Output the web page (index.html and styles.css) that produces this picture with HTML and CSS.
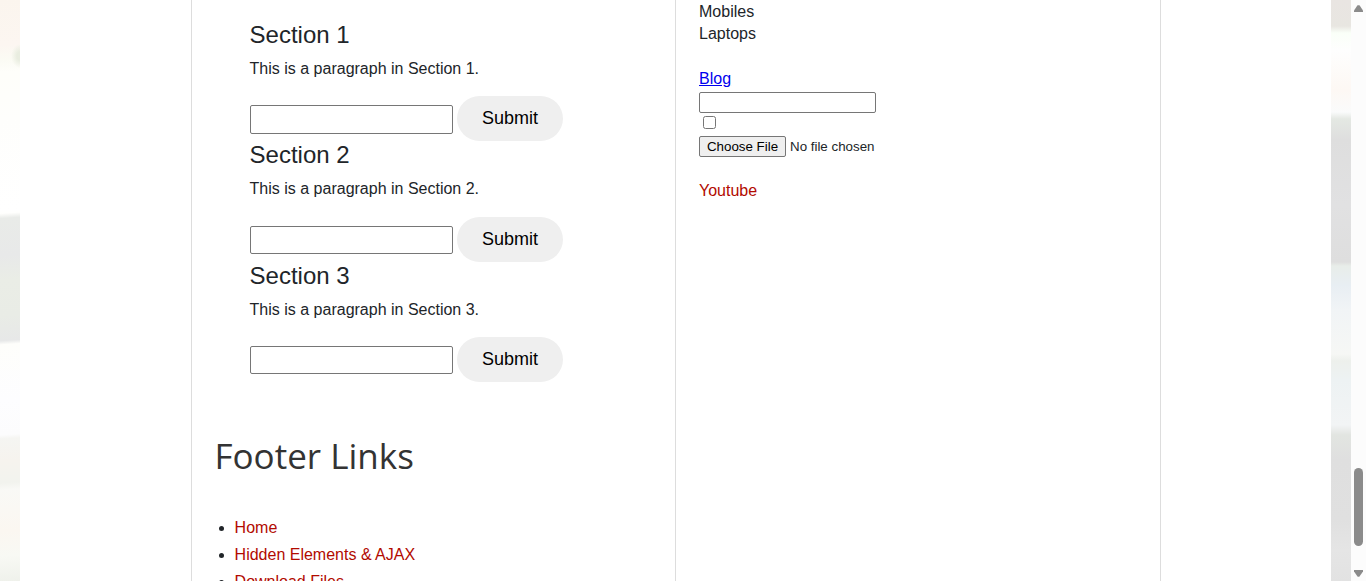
FILE: index.html
```
<!DOCTYPE html>
<html lang="en">
<head>
<meta charset="utf-8">
<title>Sections</title>
<link rel="stylesheet" href="styles.css">
</head>
<body>
<div class="page">
  <div class="backdrop backdrop-left"></div>
  <main class="sheet">
    <div class="column column-main">
      <div class="sections">
        <section class="section">
          <h4 class="section-title">Section 1</h4>
          <p class="section-text">This is a paragraph in Section 1.</p>
          <form class="section-form"><input class="section-input" type="text"><button class="submit" type="button">Submit</button></form>
        </section>
        <section class="section">
          <h4 class="section-title">Section 2</h4>
          <p class="section-text">This is a paragraph in Section 2.</p>
          <form class="section-form"><input class="section-input" type="text"><button class="submit" type="button">Submit</button></form>
        </section>
        <section class="section">
          <h4 class="section-title">Section 3</h4>
          <p class="section-text">This is a paragraph in Section 3.</p>
          <form class="section-form"><input class="section-input" type="text"><button class="submit" type="button">Submit</button></form>
        </section>
      </div>
      <h2 class="footer-title">Footer Links</h2>
      <ul class="footer-links">
        <li><a href="#">Home</a></li>
        <li><a href="#">Hidden Elements &amp; AJAX</a></li>
        <li><a href="#">Download Files</a></li>
      </ul>
    </div>
    <div class="column column-side">
      <div class="line">Mobiles</div>
      <div class="line">Laptops</div>
      <a class="blog" href="#">Blog</a>
      <input class="side-input" type="text">
      <input class="side-check" type="checkbox">
      <div class="file"><button class="file-button" type="button">Choose File</button><span>No file chosen</span></div>
      <a class="youtube" href="#">Youtube</a>
    </div>
  </main>
  <div class="backdrop backdrop-right"></div>
  <div class="scrollbar">
    <svg class="arrow" width="9" height="7" viewBox="0 0 9 7"><path d="M3.5 .2H5.5L9 5.5V7H0V5.5Z" fill="#8b8b8b"/></svg>
    <div class="thumb"></div>
    <svg class="arrow" width="9" height="7" viewBox="0 0 9 7"><path d="M3.7 6.8H5.3L9 1.5V0H0V1.5Z" fill="#8b8b8b"/></svg>
  </div>
</div>
</body>
</html>
```
FILE: styles.css
```
* { box-sizing: border-box; }
body {
  margin: 0;
  overflow: hidden;
  background: #fff;
  color: #212529;
  font: 16px/22.4px "Liberation Sans", Arial, sans-serif;
}
a { color: #b20a00; text-decoration: none; }
.page { display: flex; height: 581px; overflow: hidden; }
.backdrop { flex: 0 0 20px; }
.backdrop-left {
  background:
    radial-gradient(ellipse 9px 12px at 20px 56px, #e9ede0 35%, transparent),
    linear-gradient(176deg, #fbf5ee 0, #fcf6f1 45px, #fbfbf4 60px, #fefefa 72px, #fefefc 120px, #fff 210px, #fffffd 213px, #e9ebe8 218px, #e8e9e9 255px, #eaede6 280px, #e9ece6 315px, #e7e8e8 340px, #fefefb 344px, #fdfdff 400px, #fcfcfd 434px, #f5f5f2 438px, #f6f3ee 460px, #f2f3ee 482px, #f9f9f6 489px, #fbf7f1 530px, #f8f9f4 555px, #eff1eb 581px);
}
.backdrop-right {
  background: linear-gradient(to bottom, #e9e5e2 0, #e8e6e1 26px, #fafff8 33px, #fefefe 50px, #fdf8f4 90px, #fafbfb 112px, #e4e8e3 119px, #dedede 140px, #e1e1e2 205px, #dedede 262px, #e8ede9 266px, #e8eef3 285px, #f1f4f6 310px, #f6f7f5 354px, #edf0ec 361px, #edf2f3 380px, #f2f4f5 425px, #e2e5e1 435px, #dfdfdf 460px, #e0e0e0 520px, #e5e5e5 550px, #e2e2e2 581px);
}
.sheet { display: flex; flex: 1; padding-left: 171px; background: #fff; }
.column { border-left: 1px solid #ddd; }
.column-main { width: 484px; padding: 21px 23px 0; }
.column-side {
  display: flex;
  flex-direction: column;
  align-items: flex-start;
  width: 486px;
  padding: 1px 23px 0;
  border-right: 1px solid #ddd;
}
.sections { padding-left: 34.6px; }
.section { height: 120.4px; }
.section-title { margin: 0 0 8px; font-size: 24px; font-weight: 400; line-height: 28.8px; }
.section-text { margin: 0 0 16px; }
.section-form { display: flex; align-items: flex-start; gap: 4.4px; margin: 0; }
.section-input {
  width: 203px;
  height: 28.4px;
  margin-top: 9px;
  border: 1px solid #767676;
  border-radius: 2px;
}
.submit {
  width: 106px;
  height: 45px;
  padding: 0;
  border: 0;
  border-radius: 23px;
  background: #efefef;
  color: #000;
  font: 18px "Liberation Sans", Arial, sans-serif;
}
.footer-title {
  margin: 49.6px 0 34.3px -.5px;
  color: #333;
  font: 400 35px/48px "Open Sans", sans-serif;
}
.footer-links { margin: 0; padding-left: 19.6px; line-height: 27.2px; }
.blog { margin: 22.2px 0 2px; color: #0000ee; text-decoration: underline; }
.side-input { width: 177px; height: 21px; border: 1px solid #767676; border-radius: 2px; }
.side-check { width: 13px; height: 13px; margin: 3px 4px 7px; }
.file { display: flex; align-items: center; gap: 4px; height: 21px; font-size: 13.333px; }
.file-button {
  width: 87px;
  height: 21px;
  padding: 0;
  border: 1px solid #767676;
  border-radius: 2px;
  background: #efefef;
  color: #000;
  font: 13.333px "Liberation Sans", Arial, sans-serif;
}
.youtube { margin-top: 22.4px; }
.scrollbar {
  display: flex;
  flex: 0 0 15px;
  flex-direction: column;
  align-items: center;
  padding: 5px 0 4px;
  background: #fcfcfc;
}
.arrow { display: block; }
.thumb { width: 9px; height: 78px; margin: auto 0 24px; border-radius: 5px; background: #8b8b8b; }
```
